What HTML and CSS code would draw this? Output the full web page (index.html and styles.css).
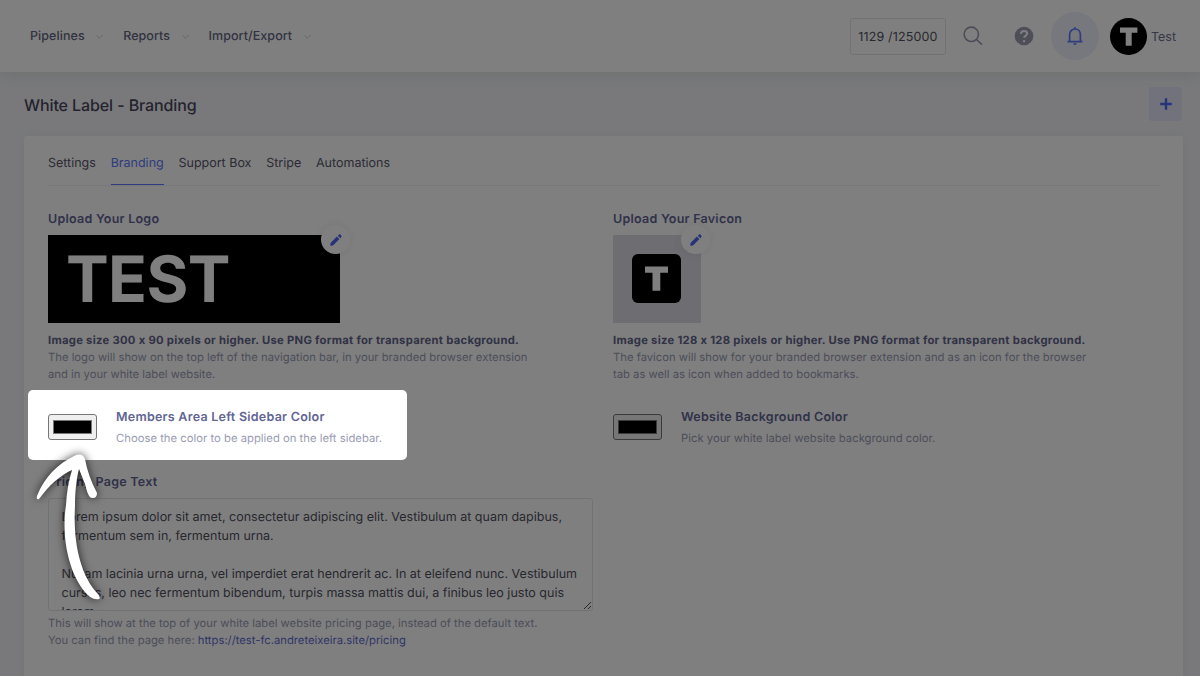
FILE: index.html
```html
<!DOCTYPE html>
<html lang="en">
<head>
<meta charset="utf-8">
<title>White Label - Branding</title>
<link rel="stylesheet" href="styles.css">
</head>
<body>
<header class="topbar">
  <nav class="menu">
    <a class="menu-item">Pipelines<svg class="chev" viewBox="0 0 8 6"><path d="M1 1.5 3.2 4.3 7 1"/></svg></a>
    <a class="menu-item">Reports<svg class="chev" viewBox="0 0 8 6"><path d="M1 1.5 3.2 4.3 7 1"/></svg></a>
    <a class="menu-item">Import/Export<svg class="chev" viewBox="0 0 8 6"><path d="M1 1.5 3.2 4.3 7 1"/></svg></a>
  </nav>
  <div class="tools">
    <div class="quota">1129 /125000</div>
    <svg class="search" viewBox="0 0 20 20"><circle cx="8.3" cy="8.3" r="7.2"/><path d="M13.5 13.5 19 18.6"/></svg>
    <svg class="help" viewBox="0 0 20 20"><circle cx="10" cy="10" r="9.3"/><path d="M6.9 7.8C7.1 5.9 8.4 5 10.1 5c1.8 0 3.1 1 3.1 2.6 0 2.2-3 2.3-3 4.2"/><path d="M10.1 14.1v2.1"/></svg>
    <div class="bell"><svg viewBox="0 0 18 20"><path d="M1.5 15.6h15M3.6 15.4V8.7C3.6 5.4 5.9 3 9 3s5.4 2.4 5.4 5.7v6.7M9 3V1.2"/><path class="clapper" d="M7.2 17.2h3.6a1.8 1.8 0 0 1-3.6 0z"/></svg></div>
    <div class="avatar"><svg viewBox="0 0 37 37"><path d="M10 9.5h17.4v5.2h-5.7v13h-6v-13H10z"/></svg></div>
    <span class="user">Test</span>
  </div>
</header>
<div class="subheader">
  <h1 class="title">White Label - Branding</h1>
  <div class="add"><svg viewBox="0 0 12 12"><path d="M6 .2v11.6M.2 6h11.6"/></svg></div>
</div>
<main class="card">
  <div class="tabs">
    <a class="tab">Settings</a><a class="tab active">Branding</a><a class="tab">Support Box</a><a class="tab">Stripe</a><a class="tab">Automations</a>
  </div>
  <div class="columns">
    <section class="upload">
      <div class="label">Upload Your Logo</div>
      <div class="preview logo"><span>TEST</span>
        <div class="edit"><svg viewBox="0 0 12 12"><path d="M.3 11.7.5 9 6.9 2.6l2.5 2.5L3 11.5zM7.8 1.8l1-1c.6-.6 1.3-.6 1.8-.1l.7.7c.5.5.5 1.2-.1 1.8l-1 1z"/></svg></div>
      </div>
      <div class="size">Image size 300 x 90 pixels or higher. Use PNG format for transparent background.</div>
      <div class="hint">The logo will show on the top left of the navigation bar, in your branded browser extension<br>and in your white label website.</div>
    </section>
    <section class="upload">
      <div class="label">Upload Your Favicon</div>
      <div class="preview favicon"><div class="tile"><svg viewBox="0 0 49 49"><path d="M13 12.5h23v6.2h-7.7v18h-7.8v-18H13z"/></svg></div>
        <div class="edit"><svg viewBox="0 0 12 12"><path d="M.3 11.7.5 9 6.9 2.6l2.5 2.5L3 11.5zM7.8 1.8l1-1c.6-.6 1.3-.6 1.8-.1l.7.7c.5.5.5 1.2-.1 1.8l-1 1z"/></svg></div>
      </div>
      <div class="size">Image size 128 x 128 pixels or higher. Use PNG format for transparent background.</div>
      <div class="hint">The favicon will show for your branded browser extension and as an icon for the browser<br>tab as well as icon when added to bookmarks.</div>
    </section>
    <section class="picker">
      <div class="swatch"><i></i></div>
      <div><div class="label">Members Area Left Sidebar Color</div><div class="hint">Choose the color to be applied on the left sidebar.</div></div>
      <div class="spotlight"></div>
    </section>
    <section class="picker">
      <div class="swatch"><i></i></div>
      <div><div class="label">Website Background Color</div><div class="hint">Pick your white label website background color.</div></div>
    </section>
  </div>
  <section class="pricing">
    <div class="label">Pricing Page Text</div>
    <div class="textarea">Lorem ipsum dolor sit amet, consectetur adipiscing elit. Vestibulum at quam dapibus,<br>fermentum sem in, fermentum urna.<br><br>Nullam lacinia urna urna, vel imperdiet erat hendrerit ac. In at eleifend nunc. Vestibulum<br>cursus, leo nec fermentum bibendum, turpis massa mattis dui, a finibus leo justo quis<br>lorem.
      <svg class="grip" viewBox="0 0 9 9"><path d="M1 8 8 1M5 8l3-3"/></svg>
    </div>
    <div class="hint">This will show at the top of your white label website pricing page, instead of the default text.<br>You can find the page here: <a class="link">https://test-fc.andreteixeira.site/pricing</a></div>
  </section>
</main>
<svg class="arrow" viewBox="0 0 120 170"><path d="M65 157C48 143 35 105 41 65Q42 46 47 30C36 35 25 44 14 59Q11 60 12 56C20 36 33 24 49 16Q57 12 60 19C62 30 66 42 72 53Q72 58 68 58C64 59 62 52 60 44L54 29C51 40 50 54 50 66C48 102 55 135 73 154Q76 158 74 159Q70 160 65 157Z"/></svg>
</body>
</html>
```
FILE: styles.css
```css
* { box-sizing: border-box; }
body {
  margin: 0;
  height: 676px;
  overflow: hidden;
  position: relative;
  background: #f2f3f8;
  font-family: Inter, "Liberation Sans", sans-serif;
  font-size: 12.5px;
  font-feature-settings: "calt" 0;
  text-rendering: geometricPrecision;
  color: #48465b;
}
svg { display: block; flex: none; }

.topbar {
  height: 72px;
  display: flex;
  justify-content: space-between;
  align-items: center;
  padding: 0 24px 0 30px;
  background: #fff;
  box-shadow: 0 2px 14px rgba(90, 90, 60, 0.14);
}
.menu { display: flex; gap: 19px; color: #646682; font-weight: 500; padding-top: 2px; }
.menu-item { display: flex; align-items: center; gap: 11.5px; line-height: 20px; letter-spacing: 0.06px; }
.chev { width: 8px; height: 6px; fill: none; stroke: #d0d2e0; stroke-width: 1; }
.tools { display: flex; align-items: center; }
.quota {
  width: 96px; height: 37px; line-height: 37px; margin-right: 17px;
  border: 1px solid #e5e5ea; border-radius: 3px; text-align: center; white-space: nowrap; color: #50505c;
  letter-spacing: 0.15px;
}
.search { width: 20px; height: 20px; fill: none; stroke: #9899ac; stroke-width: 1.6; margin-right: 31px; }
.help { width: 20px; height: 20px; margin-right: 17px; fill: #9c9db3; }
.help path { fill: none; stroke: #fff; stroke-width: 2; }
.bell { width: 48px; height: 48px; border-radius: 50%; background: #eef0fb; display: flex; align-items: center; justify-content: center; margin-right: 11px; }
.bell svg { width: 18px; height: 20px; fill: none; stroke: #5d78ff; stroke-width: 1.7; }
.bell .clapper { fill: #5d78ff; stroke: none; }
.avatar { width: 37px; height: 37px; border-radius: 50%; background: #000; fill: #fff; margin-right: 4px; }
.user { color: #6c6e8f; padding-top: 2px; }

.subheader { height: 64px; display: flex; justify-content: space-between; align-items: center; padding: 0 18px 0 24px; }
.title { margin: 1px 0 0; font-size: 16px; font-weight: 500; line-height: 24px; letter-spacing: -0.1px; color: #48465b; }
.add { width: 33px; height: 34px; border-radius: 3px; background: #e2e5f7; display: flex; align-items: center; justify-content: center; }
.add svg { width: 12px; height: 12px; fill: none; stroke: #4d6cf5; stroke-width: 2.4; }

.card { width: 1159px; height: 560px; margin-left: 24px; padding: 0 24px; background: #fff; border-radius: 3px; box-shadow: 0 0 13px rgba(82, 63, 105, 0.06); }
.tabs { height: 50px; display: flex; gap: 14.8px; border-bottom: 1px solid #f1f1f5; }
.tab { height: 49px; line-height: 20px; padding-top: 18px; color: #56566a; }
.tab.active { color: #5d78ff; border-bottom: 1px solid #5d78ff; }

.columns { display: grid; grid-template-columns: 545px 500px; column-gap: 20px; white-space: nowrap; }
.upload { height: 204px; padding-top: 24px; }
.label { font-weight: 600; line-height: 20px; letter-spacing: 0.25px; color: #626594; }
.preview { position: relative; height: 88px; margin: 5px 0 9px; }
.logo { width: 292px; background: #000; color: #fff; font-size: 64px; line-height: 89px; font-weight: 700; padding-left: 18px; letter-spacing: -0.6px; }
.favicon { width: 88px; background: #dcdce4; display: flex; align-items: center; justify-content: center; padding: 0 1px 1px 0; }
.tile { width: 49px; height: 49px; border-radius: 6px; background: #000; fill: #fff; }
.edit { position: absolute; right: -9px; top: -10px; width: 29px; height: 29px; border-radius: 50%; background: #fff; box-shadow: 0 0 10px rgba(60, 60, 80, 0.1); display: flex; align-items: center; justify-content: center; }
.logo .edit { right: -10px; }
.edit svg { width: 12px; height: 12px; fill: #5064f0; }
.size { font-size: 11.25px; line-height: 17px; font-weight: 700; letter-spacing: 0.28px; color: #62648a; }
.hint { font-size: 11.25px; line-height: 17px; color: #9a9cb4; }

.picker { position: relative; display: flex; align-items: center; gap: 19px; height: 70px; }
.picker .label { margin-top: 4px; }
.picker .hint { margin-top: 2px; letter-spacing: 0.02px; }
.swatch { width: 49px; height: 26px; margin-top: 4px; padding: 5px 4px; border: 1px solid #767676; border-radius: 3px; background: #efefef; }
.swatch i { display: block; height: 14px; background: #000; border: 1px solid #777; }
.spotlight { position: absolute; left: -20px; top: 0; width: 379px; height: 70px; border-radius: 5px; box-shadow: 0 0 0 1400px rgba(0, 0, 0, 0.5); z-index: 5; }

.pricing { width: 545px; padding-top: 13px; white-space: nowrap; }
.textarea { position: relative; height: 113px; margin: 5px 0 4px; padding: 9px 12.5px 0; border: 1px solid #e2e5ec; border-radius: 3px; line-height: 19px; overflow: hidden; color: #50505e; }
.grip { position: absolute; right: 0; bottom: 0; width: 9px; height: 9px; fill: none; stroke: #555; stroke-width: 1; }
.link { color: #646ccf; }

.arrow { position: absolute; left: 25px; top: 440px; width: 120px; height: 170px; overflow: visible; fill: #fff; z-index: 6; filter: drop-shadow(0 0 5px rgba(0, 0, 0, 0.75)); }
```
